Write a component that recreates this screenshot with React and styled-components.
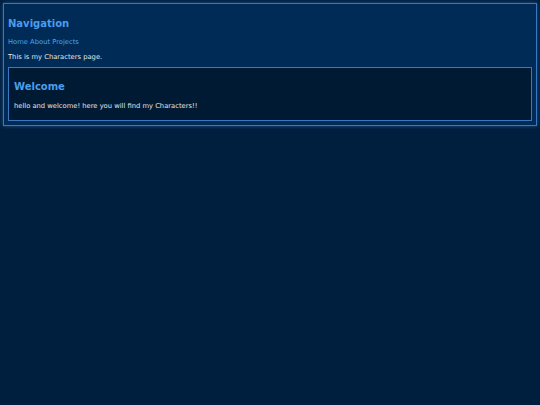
import React from "react";
import styled, { createGlobalStyle } from "styled-components";

const GlobalStyle = createGlobalStyle`
  html, body {
    margin: 0;
    padding: 0;
    background: #001f3f;
  }
  body {
    padding: 3px;
    font-family: Verdana, "DejaVu Sans", sans-serif;
    color: #e6e6e6;
  }
`;

const Panel = styled.div`
  background: #002b57;
  border: 1px solid #3b78c2;
  box-shadow: 0 0 4px rgba(59, 120, 194, 0.55);
  padding: 5px 4px 4px;
`;

const Title = styled.h2`
  margin: ${(p) => (p.inner ? "7px 0 0" : "9px 0 0")};
  font-size: 10px;
  line-height: 12px;
  font-weight: bold;
  color: #4a9eec;
`;

const Nav = styled.nav`
  margin-top: 8px;
  font-size: 6.75px;
  line-height: 9px;
`;

const NavLink = styled.a`
  color: #4da3ea;
  text-decoration: none;
`;

const Text = styled.p`
  margin: ${(p) => p.m || "6px 0 5px"};
  font-size: 6.75px;
  line-height: 9px;
`;

const Card = styled.section`
  background: #001a33;
  border: 1px solid #3b78c2;
  padding: 6px 5px 5px;
`;

export default function App() {
  return (
    <>
      <GlobalStyle />
      <Panel>
        <Title>Navigation</Title>
        <Nav>
          <NavLink href="#">Home</NavLink> <NavLink href="#">About</NavLink>{" "}
          <NavLink href="#">Projects</NavLink>
        </Nav>
        <Text>This is my Characters page.</Text>
        <Card>
          <Title inner>Welcome</Title>
          <Text m="9px 0 4px">hello and welcome! here you will find my Characters!!</Text>
        </Card>
      </Panel>
    </>
  );
}
